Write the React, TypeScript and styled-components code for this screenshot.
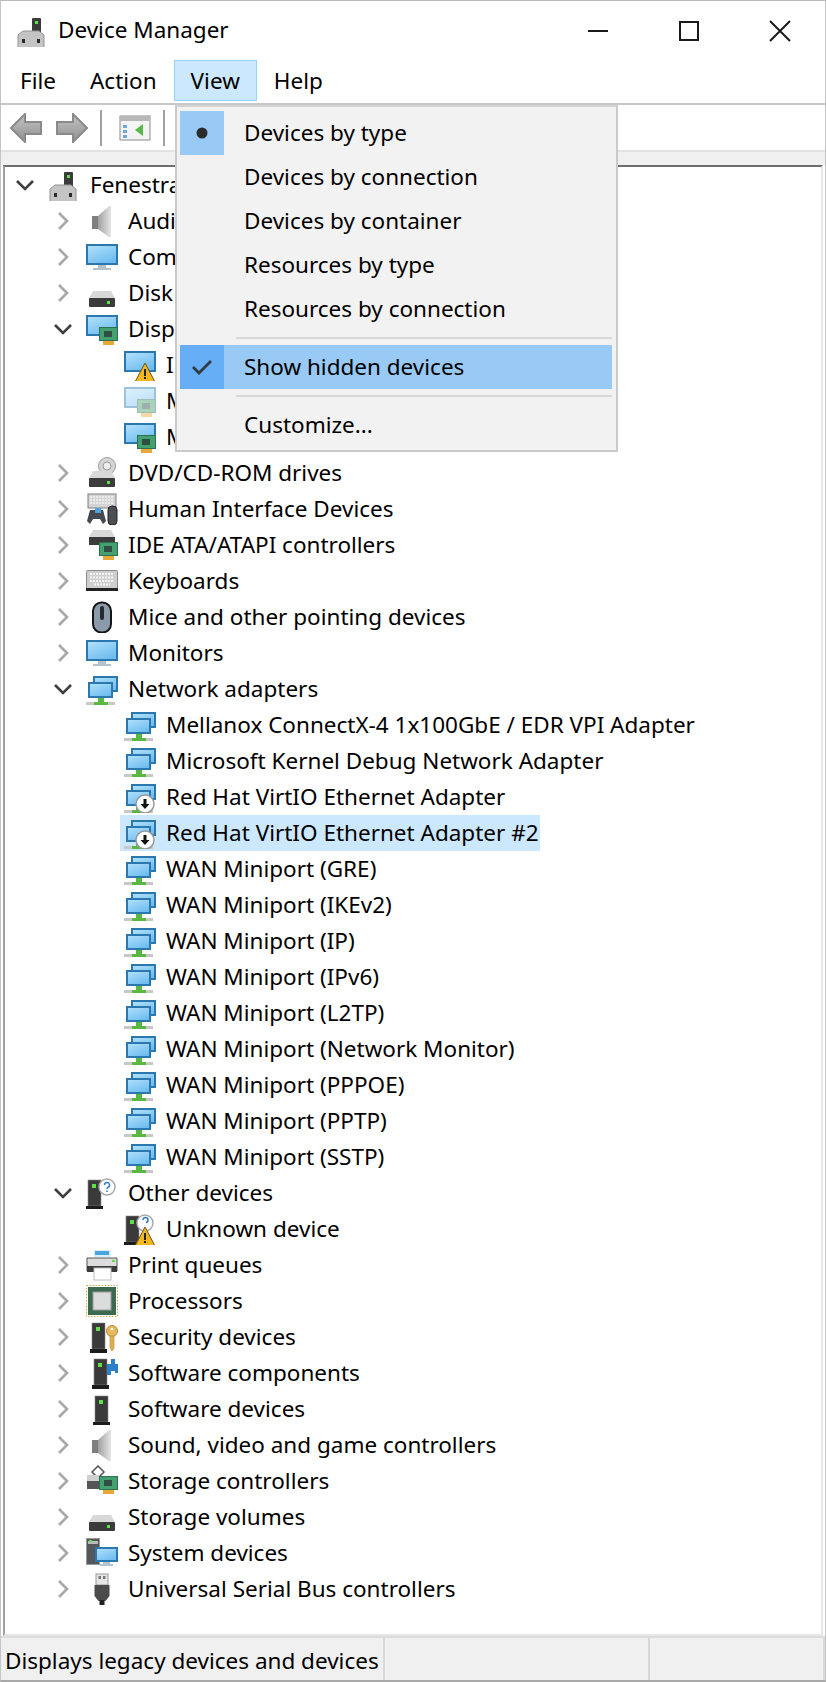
import React from 'react';
import styled, { createGlobalStyle } from 'styled-components';

const GlobalStyle = createGlobalStyle`
  html, body {
    margin: 0;
    padding: 0;
    background: #fff;
  }
  body {
    font-family: 'Noto Sans', 'Open Sans', sans-serif;
    color: #000;
  }
`;

/* shared drawing pieces, all in a 32x32 box */
const Screen = ({ x = 0, y = 3, w = 32, h = 21 }: { x?: number; y?: number; w?: number; h?: number }) => (
  <>
    <rect x={x + 1} y={y + 1} width={w - 2} height={h - 2} fill="url(#screenFill)" stroke="#2c78ae" strokeWidth={2} />
  </>
);

const Stand = () => <path d="M12 24h8v3h5v2H7v-2h5z" fill="#b4c2cd" />;

const Card = ({ x = 13, y = 14 }: { x?: number; y?: number }) => (
  <>
    <rect x={x + 0.5} y={y + 0.5} width={18} height={13} fill="#43a06f" stroke="#2f7050" />
    <rect x={x + 5} y={y + 4} width={8} height={6} fill="#2e4f42" />
    <rect x={x + 4} y={y + 14} width={11} height={4} fill="#e9a93a" />
  </>
);

const Warn = ({ x = 11, y = 14 }: { x?: number; y?: number }) => (
  <>
    <path d={`M${x + 10} ${y}l10 19h-20z`} fill="#f1b71f" stroke="#6b5520" />
    <path d={`M${x + 9} ${y + 6}h2v7h-2zM${x + 9} ${y + 14}h2v2h-2z`} fill="#222" />
  </>
);

const Disk = ({ y = 14 }: { y?: number }) => (
  <>
    <path d={`M7 ${y}h18l4 7H3z`} fill="#d8d8d8" />
    <rect x={3} y={y + 7} width={26} height={9} rx={1} fill="#3b3b3b" />
    <rect x={21} y={y + 10} width={3} height={3} fill="#5fe04a" />
  </>
);

const Tower = ({ x = 2, y = 3 }: { x?: number; y?: number }) => (
  <>
    <rect x={x} y={y} width={13} height={26} fill="#3a3a3a" stroke="#888" strokeWidth={0.6} />
    <rect x={x + 4} y={y + 4} width={4} height={4} fill="#5fe04a" />
    <rect x={x - 2} y={y + 26} width={17} height={4} fill="#1c1c1c" />
  </>
);

const NetBase = () => (
  <>
    <rect x={8} y={4} width={23} height={14} fill="url(#screenFill)" stroke="#2c78ae" strokeWidth={2} />
    <rect x={3} y={10} width={23} height={14} fill="url(#screenFill)" stroke="#2c78ae" strokeWidth={2} />
    <rect x={12} y={25} width={6} height={4} fill="#58b840" />
    <rect x={0} y={29} width={29} height={4} fill="#c8c8c8" />
    <rect x={8} y={29} width={14} height={4} fill="#58b840" />
  </>
);

const Clock = () => (
  <>
    <circle cx={21} cy={23} r={9} fill="#fff" stroke="#9a9a9a" strokeWidth={1.5} />
    <path d="M19.5 18h3v5h3l-4.500 5-4.500-5h3z" fill="#111" />
  </>
);

const Pc = () => (
  <>
    <rect x={16} y={3} width={9} height={17} rx={1} fill="#3b3b3b" />
    <rect x={19} y={6} width={3} height={3} fill="#5fe04a" />
    <path d="M2 20l5-4h16l5 4v12a1 1 0 0 1-1 1H3a1 1 0 0 1-1-1z" fill="#c4c4c4" stroke="#949494" />
    <rect x={6} y={24} width={3} height={4} fill="#2b2b2b" />
    <rect x={21} y={24} width={3} height={4} fill="#2b2b2b" />
  </>
);

const Speaker = () => (
  <>
    <rect x={6} y={11} width={6} height={13} fill="#7f7f7f" />
    <path d="M12 11L23 1h2v31h-2L12 24z" fill="url(#speakerFill)" />
  </>
);

const icons: Record<string, React.ReactNode> = {
  pc: <Pc />,
  speaker: <Speaker />,
  monitor: (
    <>
      <Screen />
      <Stand />
    </>
  ),
  disk: <Disk />,
  display: (
    <>
      <Screen y={2} h={21} />
      <Card />
    </>
  ),
  displayWarn: (
    <>
      <Screen y={2} h={21} />
      <Warn />
    </>
  ),
  displayDim: (
    <g opacity={0.45}>
      <Screen y={2} h={21} />
      <Card />
    </g>
  ),
  dvd: (
    <>
      <circle cx={21} cy={9} r={8.500} fill="#d4d4d4" stroke="#a0a0a0" />
      <circle cx={21} cy={9} r={4} fill="#eee" stroke="#9a9a9a" />
      <Disk y={14} />
    </>
  ),
  hid: (
    <>
      <rect x={2} y={1} width={28} height={14} fill="#d4d4d4" stroke="#808080" />
      <path d="M4 4h24M4 7h24M4 10h24" stroke="#f2f2f2" strokeWidth={1.400} strokeDasharray="2 1" />
      <path d="M1 28l3-11h13l3 11-3 3-3-5H7l-3 5z" fill="#45494f" />
      <rect x={9} y={15} width={6} height={5} fill="#4ca3e0" />
      <rect x={22} y={13} width={9} height={19} rx={4} fill="#4a4f55" stroke="#222" />
    </>
  ),
  ide: (
    <>
      <path d="M7 1h18l4 7H3z" fill="#d8d8d8" />
      <rect x={3} y={8} width={26} height={8} fill="#3b3b3b" />
      <Card y={13} />
    </>
  ),
  keyboard: (
    <>
      <rect x={0.5} y={5.500} width={31} height={19} rx={1} fill="#cfcfcf" stroke="#8a8a8a" />
      <path d="M4 9h24M4 12.500h24M4 16h24M8 19.500h16" stroke="#f4f4f4" strokeWidth={2} strokeDasharray="2 1" />
      <rect x={0} y={23} width={32} height={3} fill="#222" />
    </>
  ),
  mouse: (
    <>
      <rect x={7} y={1.500} width={18} height={30} rx={8.500} fill="#8b9bab" stroke="#161616" strokeWidth={2} />
      <rect x={14} y={5} width={4} height={14} rx={2} fill="#26292d" />
    </>
  ),
  network: <NetBase />,
  networkDown: (
    <>
      <NetBase />
      <Clock />
    </>
  ),
  other: (
    <>
      <Tower />
      <circle cx={21} cy={10} r={8} fill="#fff" stroke="#a8a8a8" strokeWidth={1.500} />
      <path d="M18.500 8a2.500 2.500 0 1 1 3.500 2.300c-.7.4-1 .8-1 1.700M21 13.500v1.500" fill="none" stroke="#2f7cc9" strokeWidth={1.500} />
    </>
  ),
  unknown: (
    <>
      <Tower />
      <circle cx={21} cy={10} r={8} fill="#fff" stroke="#a8a8a8" strokeWidth={1.500} />
      <path d="M19 7a2.500 2.500 0 1 1 3 2.500" fill="none" stroke="#2f7cc9" strokeWidth={1.500} />
      <Warn />
    </>
  ),
  printer: (
    <>
      <rect x={8} y={1} width={17} height={7} fill="#d8eefb" />
      <rect x={9} y={2} width={14} height={4} fill="#49a4e0" />
      <path d="M1 9h30v13H1z" fill="#dcdcdc" stroke="#555" />
      <rect x={1} y={17} width={30} height={6} fill="#3b3b3b" />
      <rect x={26} y={11} width={3} height={2} fill="#5fe04a" />
      <rect x={8} y={19} width={17} height={12} fill="#fff" stroke="#bdbdbd" />
    </>
  ),
  cpu: (
    <>
      <rect x={0.500} y={0.500} width={31} height={31} fill="none" stroke="#d6a94a" strokeDasharray="1.500 1.500" />
      <rect x={2} y={2} width={28} height={28} fill="#3c6a50" />
      <rect x={7} y={7} width={18} height={18} fill="#dcdcdc" stroke="#999" />
    </>
  ),
  security: (
    <>
      <Tower x={6} y={2} />
      <circle cx={26} cy={10} r={5.500} fill="#e8b95b" stroke="#b48a34" />
      <circle cx={26} cy={8} r={1.300} fill="#fff" />
      <path d="M24 15h4v12l-2 3-2-3z" fill="#e2ae4e" stroke="#b48a34" strokeWidth={0.6} />
    </>
  ),
  component: (
    <>
      <Tower x={8} y={2} />
      <path d="M21 7h4V2h4v5h3v9h-3v-2h-4v4h-4z" fill="#2e7fc9" />
    </>
  ),
  software: <Tower x={9} y={3} />,
  storage: (
    <>
      <path d="M12 1l6 6-6 6-6-6z" fill="none" stroke="#555" strokeWidth={1.500} />
      <path d="M1 10h12l4 7H1z" fill="#d0d0d0" />
      <rect x={1} y={16} width={14} height={8} fill="#555" />
      <Card y={11} />
    </>
  ),
  volume: <Disk />,
  system: (
    <>
      <rect x={0.500} y={1.500} width={13} height={26} fill="#55585b" stroke="#999" />
      <rect x={2} y={4} width={10} height={3} fill="#bbb" />
      <rect x={3} y={3} width={3} height={2} fill="#5fe04a" />
      <Screen x={9} y={10} w={23} h={15} />
      <path d="M17 25h7v2h3v2H14v-2h3z" fill="#b4c2cd" />
    </>
  ),
  usb: (
    <>
      <rect x={10} y={1} width={12} height={11} fill="#e6e6e6" stroke="#999" />
      <rect x={12.500} y={3} width={2.500} height={3} fill="#777" />
      <rect x={17} y={3} width={2.500} height={3} fill="#777" />
      <path d="M8.500 12h15v11l-4 5h-7l-4-5z" fill="#4b4b4b" />
      <rect x={13.500} y={27} width={5} height={6} rx={1} fill="#222" />
    </>
  ),
};

type IconName = keyof typeof icons;

const DeviceIcon = ({ name, className }: { name: IconName; className?: string }) => (
  <svg className={className} viewBox="0 0 32 32" width="32" height="32">
    {icons[name]}
  </svg>
);

const Defs = styled.svg`
  position: absolute;
  width: 0;
  height: 0;
`;

const Window = styled.div`
  width: 826px;
  height: 1682px;
  box-sizing: border-box;
  display: flex;
  flex-direction: column;
  position: relative;
  overflow: hidden;
  border-top: 1px solid #b9b9b9;
  border-left: 1px solid #c4c4c4;
  border-right: 1px solid #c4c4c4;
  border-bottom: 2px solid #a8a8a8;
`;

const TitleBar = styled.header`
  height: 59px;
  display: flex;
  align-items: center;
  padding-left: 15px;
  flex-shrink: 0;
`;

const AppIcon = styled(DeviceIcon)`
  flex-shrink: 0;
`;

const Title = styled.h1`
  margin: -2px 0 0 10px;
  flex: 1;
  font-size: 22.5px;
  font-weight: 400;
`;

const WindowButton = styled.div`
  width: 91px;
  height: 59px;
  display: flex;
  align-items: center;
  justify-content: center;
`;

const MenuBar = styled.nav`
  height: 43px;
  display: flex;
  align-items: flex-start;
  padding-left: 2px;
  border-bottom: 2px solid #c8c8c8;
  flex-shrink: 0;
`;

const MenuTitle = styled.div<{ $open?: boolean }>`
  height: 41px;
  box-sizing: border-box;
  padding: 0 16px;
  display: flex;
  align-items: center;
  font-size: 22.5px;
  border: 1px solid ${p => (p.$open ? '#99d1ff' : 'transparent')};
  background: ${p => (p.$open ? '#cce8ff' : 'transparent')};
`;

const Toolbar = styled.div`
  height: 45px;
  display: flex;
  align-items: center;
  padding-left: 9px;
  flex-shrink: 0;
`;

const ToolIcon = styled.svg<{ $gap?: number }>`
  display: block;
  flex-shrink: 0;
  margin-left: ${p => p.$gap ?? 0}px;
`;

const ToolSep = styled.span<{ $left: number; $right: number }>`
  width: 2px;
  height: 36px;
  background: #a0a0a0;
  margin-left: ${p => p.$left}px;
  margin-right: ${p => p.$right}px;
`;

const Band = styled.div`
  height: 13px;
  background: #f0f0f0;
  border-top: 2px solid #e2e2e2;
  flex-shrink: 0;
`;

const TreePane = styled.div`
  flex: 1;
  margin: 0 2px 0 2px;
  border-top: 2px solid #6e6e6e;
  border-left: 2px solid #a0a0a0;
  border-right: 2px solid #e6e6e6;
  border-bottom: 2px solid #e6e6e6;
  min-height: 0;
`;

const Row = styled.div<{ $level: number }>`
  height: 36px;
  display: flex;
  align-items: center;
  padding-left: ${p => p.$level * 38}px;
`;

const ArrowBox = styled.div`
  width: 39px;
  height: 36px;
  flex-shrink: 0;
  display: flex;
  align-items: center;
  justify-content: center;
`;

const Cell = styled.div<{ $selected?: boolean }>`
  height: 36px;
  display: flex;
  align-items: center;
  padding: 0 ${p => (p.$selected ? 1 : 8)}px 0 4px;
  background: ${p => (p.$selected ? '#cce8ff' : 'transparent')};
`;

const Label = styled.span`
  margin: 0 0 2px 10px;
  font-size: 22.5px;
  white-space: nowrap;
`;

const StatusBar = styled.footer`
  height: 42px;
  display: flex;
  align-items: stretch;
  background: #f0f0f0;
  border-top: 2px solid #dcdcdc;
  flex-shrink: 0;
`;

const StatusCell = styled.div<{ $width?: number }>`
  width: ${p => (p.$width ? `${p.$width}px` : 'auto')};
  flex: ${p => (p.$width ? 'none' : 1)};
  box-sizing: border-box;
  padding: 2px 0 0 4px;
  display: flex;
  align-items: center;
  font-size: 22.5px;
  white-space: nowrap;
  border-right: 2px solid #d8d8d8;
`;

const DropMenu = styled.div`
  position: absolute;
  left: 174px;
  top: 104px;
  width: 443px;
  box-sizing: border-box;
  padding: 4px 4px 3px 3px;
  background: #f2f2f2;
  border: 2px solid #cacaca;
  border-top-color: #d4d4d4;
`;

const MenuRow = styled.div<{ $active?: boolean }>`
  height: 44px;
  display: flex;
  align-items: center;
  font-size: 22.5px;
  background: ${p => (p.$active ? '#99c9f5' : 'transparent')};
`;

const MenuText = styled.span`
  margin-bottom: 2px;
`;

const MarkBox = styled.div<{ $tone?: 'soft' | 'strong' }>`
  width: 44px;
  height: 44px;
  display: flex;
  align-items: center;
  justify-content: center;
  margin-right: 20px;
  background: ${p => (p.$tone === 'soft' ? '#99c9f5' : p.$tone === 'strong' ? '#66aef5' : 'transparent')};
`;

const MenuSep = styled.div`
  height: 2px;
  margin: 6px 0 6px 56px;
  background: #d8d8d8;
`;

const Chevron = ({ open }: { open: boolean }) =>
  open ? (
    <svg width="20" height="14" viewBox="0 0 20 14">
      <path d="M2 3l8 8 8-8" fill="none" stroke="#3f3f3f" strokeWidth="2.600" />
    </svg>
  ) : (
    <svg width="14" height="20" viewBox="0 0 14 20">
      <path d="M3 2l8 8-8 8" fill="none" stroke="#a8a8a8" strokeWidth="2.600" />
    </svg>
  );

type Node = { level: number; label: string; icon: IconName; arrow?: 'open' | 'closed'; selected?: boolean };

const wan = ['GRE', 'IKEv2', 'IP', 'IPv6', 'L2TP', 'Network Monitor', 'PPPOE', 'PPTP', 'SSTP'];

const nodes: Node[] = [
  { level: 0, label: 'Fenestra', icon: 'pc', arrow: 'open' },
  { level: 1, label: 'Audio', icon: 'speaker', arrow: 'closed' },
  { level: 1, label: 'Computer', icon: 'monitor', arrow: 'closed' },
  { level: 1, label: 'Disk', icon: 'disk', arrow: 'closed' },
  { level: 1, label: 'Display', icon: 'display', arrow: 'open' },
  { level: 2, label: 'Intel', icon: 'displayWarn' },
  { level: 2, label: 'Mirror', icon: 'displayDim' },
  { level: 2, label: 'Matrox', icon: 'display' },
  { level: 1, label: 'DVD/CD-ROM drives', icon: 'dvd', arrow: 'closed' },
  { level: 1, label: 'Human Interface Devices', icon: 'hid', arrow: 'closed' },
  { level: 1, label: 'IDE ATA/ATAPI controllers', icon: 'ide', arrow: 'closed' },
  { level: 1, label: 'Keyboards', icon: 'keyboard', arrow: 'closed' },
  { level: 1, label: 'Mice and other pointing devices', icon: 'mouse', arrow: 'closed' },
  { level: 1, label: 'Monitors', icon: 'monitor', arrow: 'closed' },
  { level: 1, label: 'Network adapters', icon: 'network', arrow: 'open' },
  { level: 2, label: 'Mellanox ConnectX-4 1x100GbE / EDR VPI Adapter', icon: 'network' },
  { level: 2, label: 'Microsoft Kernel Debug Network Adapter', icon: 'network' },
  { level: 2, label: 'Red Hat VirtIO Ethernet Adapter', icon: 'networkDown' },
  { level: 2, label: 'Red Hat VirtIO Ethernet Adapter #2', icon: 'networkDown', selected: true },
  ...wan.map((name): Node => ({ level: 2, label: `WAN Miniport (${name})`, icon: 'network' })),
  { level: 1, label: 'Other devices', icon: 'other', arrow: 'open' },
  { level: 2, label: 'Unknown device', icon: 'unknown' },
  { level: 1, label: 'Print queues', icon: 'printer', arrow: 'closed' },
  { level: 1, label: 'Processors', icon: 'cpu', arrow: 'closed' },
  { level: 1, label: 'Security devices', icon: 'security', arrow: 'closed' },
  { level: 1, label: 'Software components', icon: 'component', arrow: 'closed' },
  { level: 1, label: 'Software devices', icon: 'software', arrow: 'closed' },
  { level: 1, label: 'Sound, video and game controllers', icon: 'speaker', arrow: 'closed' },
  { level: 1, label: 'Storage controllers', icon: 'storage', arrow: 'closed' },
  { level: 1, label: 'Storage volumes', icon: 'volume', arrow: 'closed' },
  { level: 1, label: 'System devices', icon: 'system', arrow: 'closed' },
  { level: 1, label: 'Universal Serial Bus controllers', icon: 'usb', arrow: 'closed' },
];

const App: React.FC = () => {
  return (
    <>
      <GlobalStyle />
      <Defs>
        <defs>
          <linearGradient id="screenFill" x1="0" y1="0" x2="0.6" y2="1">
            <stop offset="0" stopColor="#b4e2fc" />
            <stop offset="1" stopColor="#6fbdf0" />
          </linearGradient>
          <linearGradient id="speakerFill" x1="0" y1="0" x2="1" y2="0">
            <stop offset="0" stopColor="#a0a0a0" />
            <stop offset="1" stopColor="#e6e6e6" />
          </linearGradient>
          <linearGradient id="arrowFill" x1="0" y1="0" x2="0" y2="1">
            <stop offset="0" stopColor="#c4c4c4" />
            <stop offset="1" stopColor="#8f8f8f" />
          </linearGradient>
        </defs>
      </Defs>
      <Window>
        <TitleBar>
          <AppIcon name="pc" />
          <Title>Device Manager</Title>
          <WindowButton>
            <svg width="22" height="4" viewBox="0 0 22 4">
              <path d="M1 2h20" stroke="#1a1a1a" strokeWidth="2" />
            </svg>
          </WindowButton>
          <WindowButton>
            <svg width="22" height="22" viewBox="0 0 22 22">
              <rect x="2" y="2" width="18" height="18" fill="none" stroke="#1a1a1a" strokeWidth="2" />
            </svg>
          </WindowButton>
          <WindowButton>
            <svg width="22" height="22" viewBox="0 0 22 22">
              <path d="M1 1l20 20M21 1L1 21" fill="none" stroke="#1a1a1a" strokeWidth="2" />
            </svg>
          </WindowButton>
        </TitleBar>

        <MenuBar>
          <MenuTitle>File</MenuTitle>
          <MenuTitle>Action</MenuTitle>
          <MenuTitle $open>View</MenuTitle>
          <MenuTitle>Help</MenuTitle>
        </MenuBar>

        <Toolbar>
          <ToolIcon width="32" height="30" viewBox="0 0 32 30">
            <path d="M1 15L15 1v8h16v12H15v8z" fill="url(#arrowFill)" stroke="#8a8a8a" strokeWidth="2" />
          </ToolIcon>
          <ToolIcon $gap={14} width="32" height="30" viewBox="0 0 32 30">
            <path d="M31 15L17 1v8H1v12h16v8z" fill="url(#arrowFill)" stroke="#8a8a8a" strokeWidth="2" />
          </ToolIcon>
          <ToolSep $left={12} $right={17} />
          <ToolIcon width="32" height="26" viewBox="0 0 32 26">
            <rect x="1" y="1" width="30" height="24" fill="#f4f4f4" stroke="#8a8a8a" />
            <rect x="1" y="1" width="30" height="5" fill="#b8b8b8" />
            <path d="M4 10h4v3H4zM4 15h4v3H4zM4 20h4v3H4z" fill="#6fa8dc" />
            <path d="M24 9v12l-8-6z" fill="#57b84a" />
          </ToolIcon>
          <ToolSep $left={12} $right={0} />
        </Toolbar>

        <Band />

        <TreePane>
          {nodes.map(node => (
            <Row key={node.label} $level={node.level}>
              <ArrowBox>{node.arrow && <Chevron open={node.arrow === 'open'} />}</ArrowBox>
              <Cell $selected={node.selected}>
                <DeviceIcon name={node.icon} />
                <Label>{node.label}</Label>
              </Cell>
            </Row>
          ))}
        </TreePane>

        <StatusBar>
          <StatusCell $width={384}>Displays legacy devices and devices</StatusCell>
          <StatusCell $width={265} />
          <StatusCell />
        </StatusBar>

        <DropMenu>
          <MenuRow>
            <MarkBox $tone="soft">
              <svg width="14" height="14" viewBox="0 0 14 14">
                <circle cx="7" cy="7" r="5.500" fill="#2b2b2b" />
              </svg>
            </MarkBox>
            <MenuText>Devices by type</MenuText>
          </MenuRow>
          <MenuRow>
            <MarkBox />
            <MenuText>Devices by connection</MenuText>
          </MenuRow>
          <MenuRow>
            <MarkBox />
            <MenuText>Devices by container</MenuText>
          </MenuRow>
          <MenuRow>
            <MarkBox />
            <MenuText>Resources by type</MenuText>
          </MenuRow>
          <MenuRow>
            <MarkBox />
            <MenuText>Resources by connection</MenuText>
          </MenuRow>
          <MenuSep />
          <MenuRow $active>
            <MarkBox $tone="strong">
              <svg width="22" height="18" viewBox="0 0 22 18">
                <path d="M2 9l6 6L20 3" fill="none" stroke="#2f3a44" strokeWidth="2.800" />
              </svg>
            </MarkBox>
            <MenuText>Show hidden devices</MenuText>
          </MenuRow>
          <MenuSep />
          <MenuRow>
            <MarkBox />
            <MenuText>Customize...</MenuText>
          </MenuRow>
        </DropMenu>
      </Window>
    </>
  );
};

export default App;
